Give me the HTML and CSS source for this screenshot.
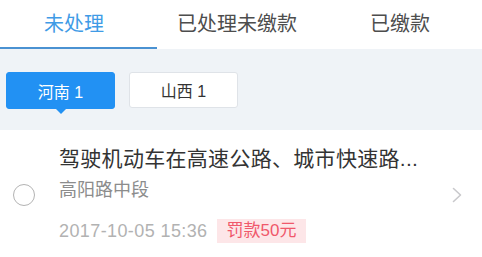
FILE: index.html
```html
<!DOCTYPE html>
<html lang="zh">
<head>
<meta charset="utf-8">
<title>违章</title>
<link rel="stylesheet" href="styles.css">
</head>
<body>
<div class="page">
  <nav class="tabs">
    <div class="tab tab-first active">未处理</div>
    <div class="tab tab-mid">已处理未缴款</div>
    <div class="tab tab-last">已缴款</div>
  </nav>
  <section class="filters">
    <button class="chip chip-active">河南 1<span class="pointer"></span></button>
    <button class="chip">山西 1</button>
  </section>
  <section class="list">
    <div class="item">
      <span class="radio"></span>
      <div class="info">
        <div class="title">驾驶机动车在高速公路、城市快速路...</div>
        <div class="place">高阳路中段</div>
        <div class="meta">
          <span class="time">2017-10-05 15:36</span>
          <span class="fine">罚款50元</span>
        </div>
      </div>
      <svg class="chev" width="10" height="16" viewBox="0 0 10 16"><polyline points="1.5,1.5 8.5,8 1.5,14.5" fill="none" stroke="#c9c9cc" stroke-width="1.6" stroke-linecap="round" stroke-linejoin="round"/></svg>
    </div>
  </section>
</div>
</body>
</html>
```

FILE: styles.css
```css
html, body {
  margin: 0;
  padding: 0;
  background: #ffffff;
}
body {
  font-family: "Liberation Sans", "Noto Sans CJK SC", sans-serif;
  width: 482px;
  height: 257px;
  overflow: hidden;
}
.page {
  display: flex;
  flex-direction: column;
}
.tabs {
  display: grid;
  grid-template-columns: 157px 165px 160px;
  height: 49px;
  background: #fff;
}
.tab {
  display: flex;
  align-items: center;
  justify-content: center;
  font-size: 20px;
  color: #4d4d4d;
  box-sizing: border-box;
  padding-bottom: 5px;
}
.tab-first {
  padding-right: 9px;
}
.tab-mid {
  padding-right: 5px;
}
.tab-last {
  padding-right: 4px;
}
.tab.active {
  color: #3f9be6;
  border-bottom: 2px solid #4a92d2;
  padding-bottom: 3px;
}
.filters {
  background: #eff3f7;
  height: 81px;
  box-sizing: border-box;
  padding: 23px 0 0 6px;
  display: flex;
  gap: 14px;
  align-items: flex-start;
}
.chip {
  position: relative;
  width: 109px;
  height: 36px;
  border-radius: 3px;
  border: 1px solid #dfe3e8;
  background: #ffffff;
  color: #333;
  font-family: "Liberation Sans", "Noto Sans CJK SC", sans-serif;
  font-size: 16px;
  padding: 0;
  margin: 0;
}
.chip-active {
  background: #2291f3;
  border-color: #2291f3;
  color: #ffffff;
  height: 37px;
}
.pointer {
  position: absolute;
  left: 50%;
  bottom: -6px;
  margin-left: -5px;
  width: 0;
  height: 0;
  border-left: 5px solid transparent;
  border-right: 5px solid transparent;
  border-top: 5px solid #2291f3;
}
.list {
  background: #fff;
}
.item {
  display: flex;
  align-items: center;
  padding: 16px 20px 14px 13px;
}
.radio {
  width: 22px;
  height: 22px;
  box-sizing: border-box;
  border: 1.5px solid #b3b3b3;
  border-radius: 50%;
  flex: none;
  margin-right: 24px;
}
.info {
  flex: 1;
  display: flex;
  flex-direction: column;
}
.title {
  font-size: 21px;
  line-height: 26px;
  color: #333333;
  white-space: nowrap;
  letter-spacing: 0.3px;
}
.place {
  margin-top: 5px;
  font-size: 18px;
  line-height: 26px;
  color: #8c8c8c;
}
.meta {
  margin-top: 16px;
  display: flex;
  align-items: center;
  gap: 9px;
}
.time {
  font-size: 18px;
  line-height: 24px;
  color: #b2b2b2;
  letter-spacing: 0.4px;
}
.fine {
  background: #fde6e8;
  color: #f0586b;
  font-size: 17px;
  line-height: 24px;
  padding: 0 10px;
}
.chev {
  flex: none;
}
```
